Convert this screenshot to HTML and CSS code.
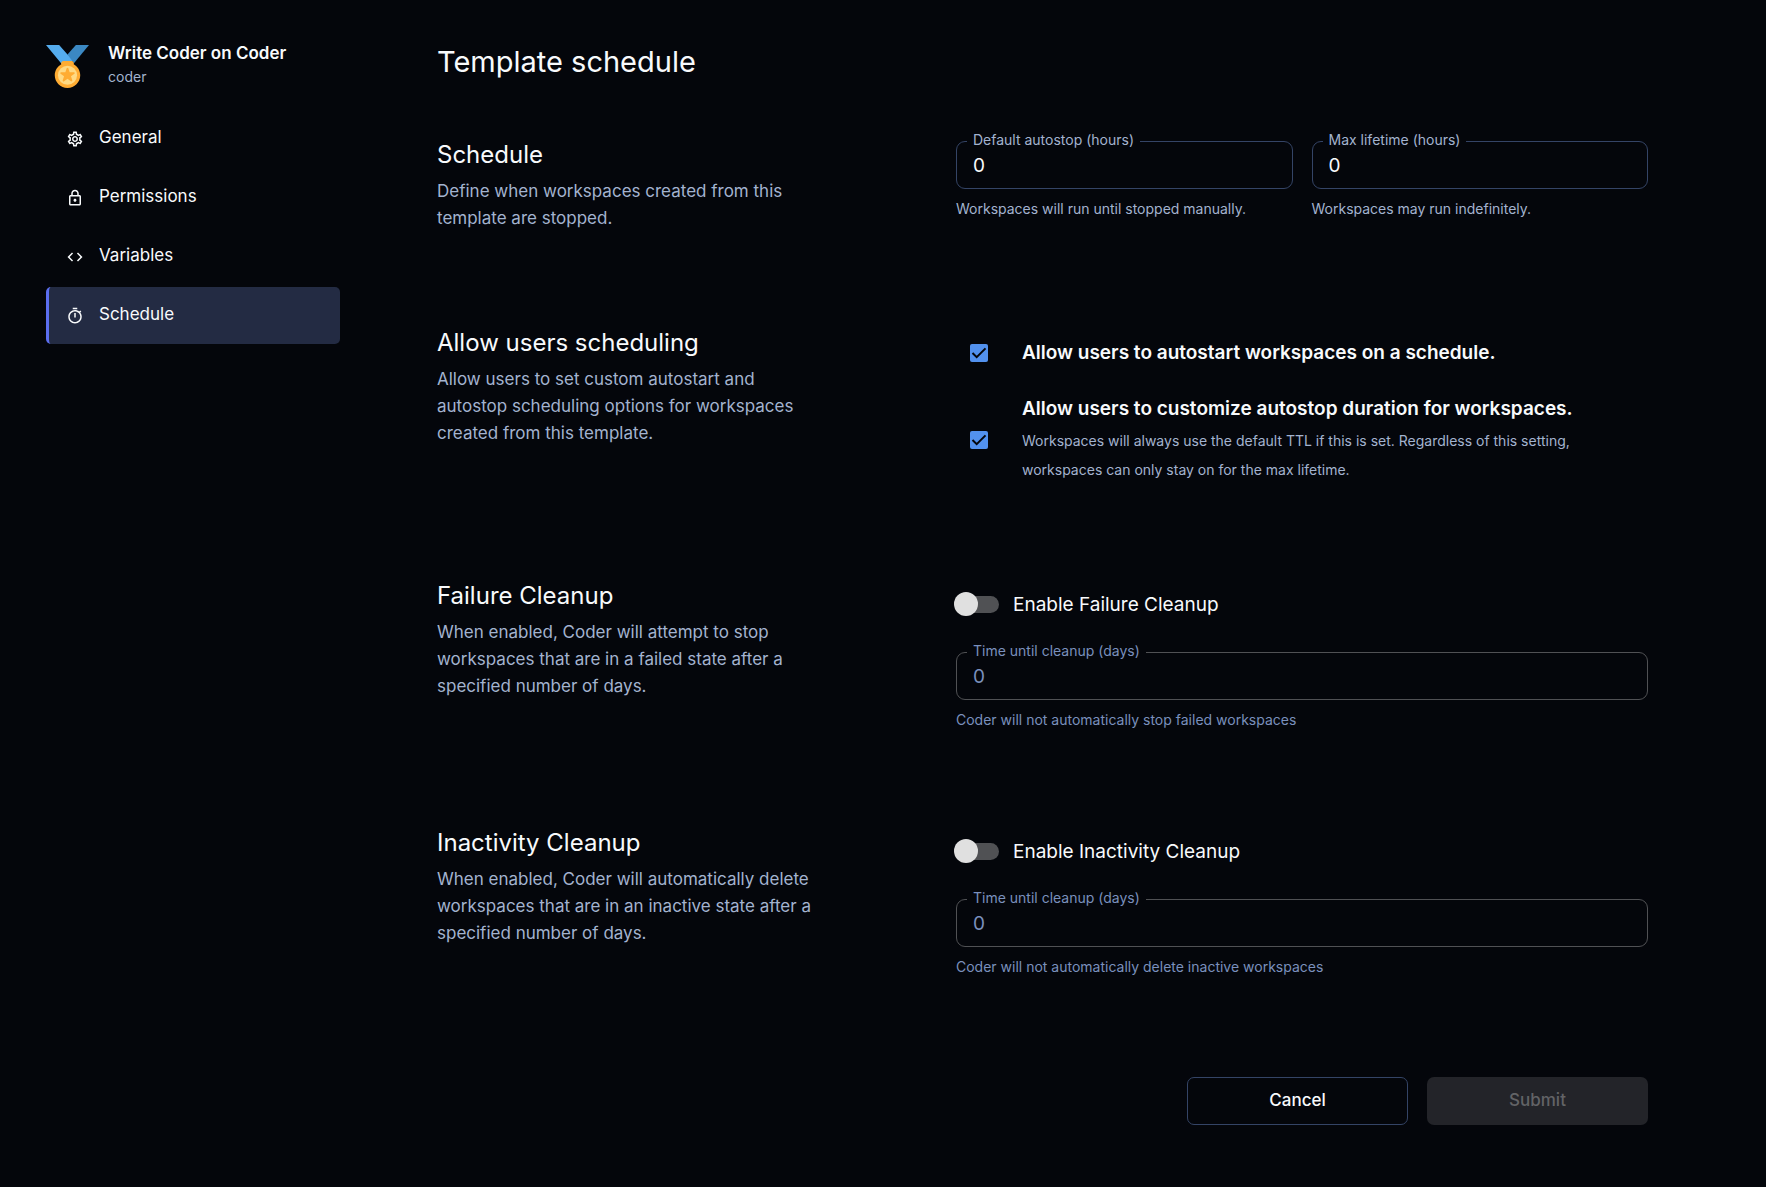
FILE: index.html
```html
<!DOCTYPE html>
<html lang="en">
<head>
<meta charset="utf-8">
<meta name="viewport" content="width=device-width, initial-scale=1">
<title>Template schedule - Write Coder on Coder</title>
<link rel="stylesheet" href="styles.css">
</head>
<body>
<div class="layout">
  <aside class="sidebar">
    <div class="template">
      <svg class="template-icon" viewBox="0 0 36 36" aria-hidden="true">
        <path fill="#55ACEE" d="M18 8l-7-8H0l14 17 11.521-4.75z"/>
        <path fill="#3B88C3" d="M25 0l-7 8 5.390 7.312 1.227-1.489L36 0z"/>
        <path fill="#FFAC33" d="M23.205 16.026c.08-.217.131-.448.131-.693 0-1.104-.896-2-2-2h-6.667c-1.105 0-2 .896-2 2 0 .245.05.476.131.693-3.258 1.826-5.464 5.307-5.464 9.307C7.335 31.224 12.111 36 18.002 36s10.667-4.776 10.667-10.667c0-4-2.206-7.481-5.464-9.307z"/>
        <circle fill="#FFD983" cx="18" cy="25.333" r="8"/>
        <path fill="#FFAC33" d="M21.300 30.500c-.15 0-.3-.05-.43-.14L18 28.260l-2.870 2.100c-.26.190-.6.190-.86 0-.26-.180-.37-.52-.27-.82l1.120-3.360-2.900-2.060c-.26-.180-.37-.52-.27-.82.1-.310.38-.510.7-.510l3.560-.010 1.100-3.300c.1-.300.380-.510.690-.510.320 0 .6.210.7.510l1.080 3.310 3.580.010c.320 0 .600.200.700.510.100.300-.010.640-.270.820l-2.900 2.060 1.120 3.360c.1.300-.010.640-.270.820-.130.090-.280.140-.440.140z"/>
      </svg>
      <div class="template-text">
        <span class="template-name">Write Coder on Coder</span>
        <span class="template-org">coder</span>
      </div>
    </div>
    <nav class="nav" aria-label="Template settings">
      <a class="nav-item" href="#general">
        <svg viewBox="0 0 24 24" aria-hidden="true"><path d="M19.430 12.980c.040-.320.070-.640.070-.980s-.030-.660-.070-.980l2.110-1.650c.190-.150.240-.420.120-.640l-2-3.460c-.090-.160-.260-.250-.440-.250-.060 0-.120.010-.170.030l-2.490 1c-.520-.400-1.080-.730-1.690-.980l-.380-2.650C14.460 2.180 14.250 2 14 2h-4c-.250 0-.460.180-.490.420l-.380 2.650c-.610.250-1.170.590-1.690.980l-2.490-1c-.060-.020-.120-.030-.180-.030-.170 0-.340.090-.430.250l-2 3.460c-.130.220-.070.490.120.640l2.110 1.650c-.040.320-.070.650-.070.980s.030.660.070.980l-2.110 1.650c-.190.150-.240.420-.120.640l2 3.460c.090.160.260.250.440.250.060 0 .120-.010.170-.030l2.490-1c.520.400 1.080.730 1.690.980l.380 2.650c.030.240.240.420.490.420h4c.250 0 .460-.180.490-.420l.380-2.650c.610-.250 1.170-.590 1.690-.980l2.490 1c.060.020.120.030.180.030.170 0 .340-.090.430-.250l2-3.460c.120-.220.070-.490-.120-.640l-2.110-1.650zm-1.980-1.710c.040.310.050.520.050.730s-.020.430-.050.730l-.140 1.130.890.700 1.080.840-.700 1.210-1.270-.510-1.040-.420-.900.680c-.430.320-.840.560-1.250.730l-1.060.430-.160 1.130-.200 1.350h-1.400l-.190-1.350-.160-1.130-1.060-.430c-.430-.180-.830-.410-1.230-.710l-.910-.700-1.060.430-1.270.510-.700-1.210 1.080-.840.890-.700-.140-1.130c-.030-.310-.050-.540-.050-.740s.020-.430.050-.730l.140-1.130-.890-.700-1.080-.840.700-1.210 1.270.510 1.040.420.900-.680c.430-.320.840-.560 1.250-.730l1.060-.430.160-1.130.200-1.350h1.390l.190 1.350.160 1.130 1.060.430c.430.180.830.410 1.230.710l.910.700 1.060-.430 1.270-.510.700 1.210-1.070.850-.890.700.140 1.130zM12 8c-2.210 0-4 1.790-4 4s1.790 4 4 4 4-1.790 4-4-1.790-4-4-4zm0 6c-1.100 0-2-.900-2-2s.900-2 2-2 2 .900 2 2-.900 2-2 2z"/></svg>
        General
      </a>
      <a class="nav-item" href="#permissions">
        <svg viewBox="0 0 24 24" aria-hidden="true"><path d="M18 8h-1V6c0-2.760-2.240-5-5-5S7 3.240 7 6v2H6c-1.100 0-2 .900-2 2v10c0 1.100.900 2 2 2h12c1.100 0 2-.900 2-2V10c0-1.100-.900-2-2-2zM9 6c0-1.660 1.340-3 3-3s3 1.340 3 3v2H9V6zm9 14H6V10h12v10zm-6-3c1.100 0 2-.900 2-2s-.900-2-2-2-2 .900-2 2 .900 2 2 2z"/></svg>
        Permissions
      </a>
      <a class="nav-item" href="#variables">
        <svg viewBox="0 0 24 24" aria-hidden="true"><path d="M9.400 16.600 4.800 12l4.600-4.600L8 6l-6 6 6 6 1.400-1.400zm5.200 0 4.600-4.600-4.600-4.600L16 6l6 6-6 6-1.400-1.400z"/></svg>
        Variables
      </a>
      <a class="nav-item nav-item-active" href="#schedule" aria-current="page">
        <svg viewBox="0 0 24 24" aria-hidden="true"><path d="M15 1H9v2h6V1zm-4 13h2V8h-2v6zm8.030-6.610 1.420-1.420c-.430-.510-.900-.990-1.410-1.410l-1.420 1.420C16.070 4.740 14.120 4 12 4c-4.970 0-9 4.030-9 9s4.020 9 9 9 9-4.030 9-9c0-2.120-.740-4.070-1.970-5.610zM12 20c-3.870 0-7-3.130-7-7s3.130-7 7-7 7 3.130 7 7-3.130 7-7 7z"/></svg>
        Schedule
      </a>
    </nav>
  </aside>

  <main class="main">
    <h1 class="page-title">Template schedule</h1>
    <form class="form">
      <section class="section">
        <div class="section-info">
          <h2 class="section-title">Schedule</h2>
          <p class="section-text">Define when workspaces created from this template are stopped.</p>
        </div>
        <div class="field-row">
          <div class="field">
            <label class="field-label" for="autostop">Default autostop (hours)</label>
            <input class="field-input" id="autostop" type="text" inputmode="numeric" value="0">
            <p class="field-help">Workspaces will run until stopped manually.</p>
          </div>
          <div class="field">
            <label class="field-label" for="lifetime">Max lifetime (hours)</label>
            <input class="field-input" id="lifetime" type="text" inputmode="numeric" value="0">
            <p class="field-help">Workspaces may run indefinitely.</p>
          </div>
        </div>
      </section>

      <section class="section">
        <div class="section-info">
          <h2 class="section-title">Allow users scheduling</h2>
          <p class="section-text">Allow users to set custom autostart and autostop scheduling options for workspaces created from this template.</p>
        </div>
        <div class="check-list">
          <div class="check">
            <input class="check-input" id="allow-start" type="checkbox" checked>
            <label class="check-label" for="allow-start">Allow users to autostart workspaces on a schedule.</label>
          </div>
          <div class="check">
            <input class="check-input" id="allow-stop" type="checkbox" checked aria-describedby="allow-stop-help">
            <div>
              <label class="check-label" for="allow-stop">Allow users to customize autostop duration for workspaces.</label>
              <p class="check-help" id="allow-stop-help">Workspaces will always use the default TTL if this is set. Regardless of this setting, workspaces can only stay on for the max lifetime.</p>
            </div>
          </div>
        </div>
      </section>

      <section class="section">
        <div class="section-info">
          <h2 class="section-title">Failure Cleanup</h2>
          <p class="section-text">When enabled, Coder will attempt to stop workspaces that are in a failed state after a specified number of days.</p>
        </div>
        <div class="cleanup">
          <label class="switch"><input class="switch-input" type="checkbox" role="switch">Enable Failure Cleanup</label>
          <div class="field field-disabled">
            <label class="field-label" for="failure">Time until cleanup (days)</label>
            <input class="field-input" id="failure" type="text" inputmode="numeric" value="0" disabled>
            <p class="field-help">Coder will not automatically stop failed workspaces</p>
          </div>
        </div>
      </section>

      <section class="section">
        <div class="section-info">
          <h2 class="section-title">Inactivity Cleanup</h2>
          <p class="section-text">When enabled, Coder will automatically delete workspaces that are in an inactive state after a specified number of days.</p>
        </div>
        <div class="cleanup">
          <label class="switch"><input class="switch-input" type="checkbox" role="switch">Enable Inactivity Cleanup</label>
          <div class="field field-disabled">
            <label class="field-label" for="inactivity">Time until cleanup (days)</label>
            <input class="field-input" id="inactivity" type="text" inputmode="numeric" value="0" disabled>
            <p class="field-help">Coder will not automatically delete inactive workspaces</p>
          </div>
        </div>
      </section>

      <div class="actions">
        <button class="button button-outline" type="button">Cancel</button>
        <button class="button" type="submit" disabled>Submit</button>
      </div>
    </form>
  </main>
</div>
</body>
</html>
```

FILE: styles.css
```css
:root {
  --bg: #04060b;
  --text: #f8fafc;
  --muted: #a3b3cf;
  --faint: #7a90bd;
  --border: #344466;
  --border-off: #505154;
}

*, *::before, *::after { box-sizing: border-box; }

body {
  margin: 0;
  background: var(--bg);
  color: var(--text);
  font-family: Inter, "Liberation Sans", sans-serif;
  font-size: 19px;
}

h1, h2, p { margin: 0; font-weight: 400; }

.layout {
  display: flex;
  align-items: flex-start;
  gap: 97px;
  padding: 45px 46px;
}

.sidebar { flex: 0 0 294px; }

.template { display: flex; align-items: flex-start; gap: 19px; }
.template-icon { width: 43px; height: 43px; }
.template-text { display: flex; flex-direction: column; margin-top: -4px; }
.template-name { font-size: 17px; line-height: 24px; font-weight: 600; }
.template-org { font-size: 14px; line-height: 24px; color: var(--muted); }

.nav { display: flex; flex-direction: column; gap: 2px; margin-top: 21px; }
.nav-item {
  display: flex;
  align-items: center;
  gap: 15px;
  padding: 15px 17px 17px;
  border-left: 3px solid transparent;
  border-radius: 5px;
  color: var(--text);
  font-size: 17px;
  line-height: 25px;
  text-decoration: none;
}
.nav-item svg { width: 18px; height: 18px; margin-top: 2px; fill: currentColor; }
.nav-item-active { background: #232b43; border-left-color: #5b6ef0; }

.main { flex: 1; min-width: 0; padding-right: 72px; }
.page-title { font-size: 29px; line-height: 34px; margin-bottom: 62px; }

.form { display: flex; flex-direction: column; gap: 97px; }
.section {
  display: grid;
  grid-template-columns: minmax(0, 379fr) minmax(0, 692fr);
  column-gap: 140px;
  align-items: start;
}
.section-title { font-size: 24px; line-height: 27px; margin-bottom: 10px; }
.section-text { font-size: 17px; line-height: 27px; color: var(--muted); }

.field-row { display: grid; grid-template-columns: 1fr 1fr; gap: 19px; }
.field { position: relative; }
.field-label {
  position: absolute;
  top: -10px;
  left: 11px;
  padding: 0 6px;
  background: var(--bg);
  font-size: 14px;
  line-height: 18px;
  color: var(--muted);
}
.field-input {
  display: block;
  width: 100%;
  height: 48px;
  padding: 0 16px;
  border: 1px solid var(--border);
  border-radius: 9px;
  background: transparent;
  color: var(--text);
  font: inherit;
}
.field-help { margin-top: 8px; font-size: 14px; line-height: 24px; color: var(--muted); }
.field-disabled .field-label, .field-disabled .field-help { color: var(--faint); }
.field-disabled .field-input { border-color: var(--border-off); color: var(--faint); }

.check-list { display: flex; flex-direction: column; gap: 18px; margin-bottom: -1px; }
.check { display: flex; align-items: center; gap: 34px; min-height: 47px; padding-left: 14px; }
.check-input {
  appearance: none;
  flex: none;
  width: 18px;
  height: 18px;
  margin: 0;
  border-radius: 2px;
  background: #5291ee url("data:image/svg+xml,%3Csvg xmlns='http://www.w3.org/2000/svg' viewBox='0 0 18 18'%3E%3Cpath d='M2.500 9l4.200 4.200L15.500 4.400' fill='none' stroke='%2304060b' stroke-width='2'/%3E%3C/svg%3E");
}
.check-label { display: block; font-weight: 600; line-height: 30px; }
.check-help { padding: 2px 0; font-size: 14px; line-height: 29px; color: var(--muted); }

.cleanup { display: flex; flex-direction: column; gap: 26px; }
.switch { display: flex; align-items: center; gap: 14px; height: 44px; margin-left: -2px; }
.switch-input {
  appearance: none;
  display: flex;
  align-items: center;
  width: 45px;
  height: 17px;
  margin: 0;
  background: linear-gradient(#505154, #505154) right center / 34px 17px no-repeat;
  border-radius: 9px;
}
.switch-input::before {
  content: "";
  width: 24px;
  height: 24px;
  border-radius: 50%;
  background: #e0e0e0;
}

.actions { display: flex; justify-content: flex-end; gap: 19px; padding-top: 1px; }
.button {
  width: 221px;
  height: 48px;
  padding: 0 0 2px;
  border: 0;
  border-radius: 7px;
  background: #232429;
  color: #626366;
  font: 500 17px Inter, "Liberation Sans", sans-serif;
}
.button-outline { border: 1px solid var(--border); background: transparent; color: var(--text); }
```
